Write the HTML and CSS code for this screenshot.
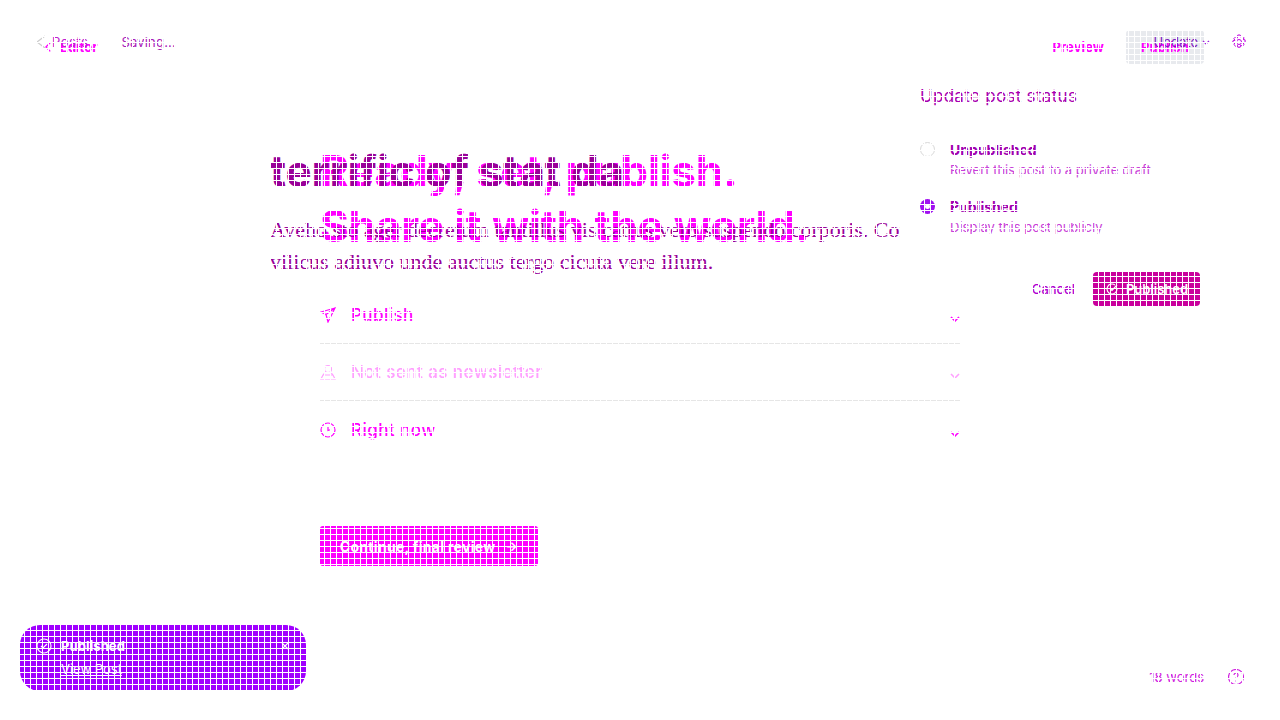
FILE: index.html
```html
<!DOCTYPE html>
<html>
<head>
  <meta charset="UTF-8">
  <title>Publish flow</title>
  <link rel="stylesheet" href="styles.css">
</head>
<body>
<div class="stage">

  <!-- publish flow -->
  <div class="layer flow">
    <header class="flow-head">
      <a class="back-editor">
        <svg class="chev-left" viewBox="0 0 8 12" width="8" height="12"><path d="M6 1 1 6l5 5"/></svg>
        Editor
      </a>
      <div class="flow-actions">
        <a class="preview">Preview</a>
        <a class="publish-btn">Publish</a>
      </div>
    </header>
    <main class="flow-main">
      <h1>Ready, set, publish.<br>Share it with the world.</h1>
      <div class="opt">
        <svg class="opt-icon" viewBox="0 0 16 16" width="16" height="16"><path d="M15 1 1 5l5 2.500 2 7.500zM15 1 6 7.500"/></svg>
        <span class="opt-text">Publish</span>
        <svg class="opt-chev" viewBox="0 0 10 6" width="10" height="6"><path d="m1 1 4 4 4-4"/></svg>
      </div>
      <div class="opt opt-off">
        <svg class="opt-icon" viewBox="0 0 16 16" width="16" height="16"><circle cx="8" cy="5" r="3.500"/><path d="M3 11h10l2 4H1zM5 8.500 3 11M11 8.500l2 2.500"/></svg>
        <span class="opt-text">Not sent as newsletter</span>
        <svg class="opt-chev" viewBox="0 0 10 6" width="10" height="6"><path d="m1 1 4 4 4-4"/></svg>
      </div>
      <div class="opt opt-last">
        <svg class="opt-icon" viewBox="0 0 16 16" width="16" height="16"><circle cx="8" cy="8" r="7"/><path d="M8 4v4.500l3-1"/></svg>
        <span class="opt-text">Right now</span>
        <svg class="opt-chev" viewBox="0 0 10 6" width="10" height="6"><path d="m1 1 4 4 4-4"/></svg>
      </div>
      <a class="continue">Continue, final review <span class="arrow">&rarr;</span></a>
    </main>
  </div>

  <!-- editor with the status menu open -->
  <div class="layer editor">
    <header class="editor-head">
      <div class="editor-left">
        <svg class="posts-chev" viewBox="0 0 10 14" width="10" height="14"><path d="M9 1 1 7l8 6"/></svg>
        <span class="posts">Posts</span>
        <span class="saving">Saving...</span>
      </div>
      <div class="editor-right">
        <span class="update">Update</span>
        <svg class="update-chev" viewBox="0 0 8 5" width="8" height="5"><path d="m1 1 3 3 3-3"/></svg>
        <svg class="gear" viewBox="0 0 16 16" width="16" height="16"><circle cx="8" cy="8" r="2.500"/><path d="M6.800 1h2.400l.4 2 1.800-1 1.700 1.700-1 1.800 2 .4v2.400l-2 .4 1 1.800-1.700 1.700-1.800-1-.4 2H6.800l-.4-2-1.800 1-1.700-1.700 1-1.800-2-.4V6.800l2-.4-1-1.800 1.700-1.700 1.800 1z"/></svg>
      </div>
    </header>
    <article class="post">
      <h2>terrific of stat da</h2>
      <p class="post-line">Aveho sto ager decretum tantillus vis cattus vero suspendo corporis. Comes</p>
      <p class="post-line">vilicus adiuvo unde auctus tergo cicuta vere illum.</p>
    </article>
    <footer class="editor-foot">
      <span class="words">18 words</span>
      <svg class="help" viewBox="0 0 16 16" width="16" height="16"><circle cx="8" cy="8" r="7.500"/><path d="M6 6a2 2 0 1 1 3 1.800c-.7.400-1 .8-1 1.700M8 11.500v1"/></svg>
    </footer>

    <div class="status-menu">
      <h3>Update post status</h3>
      <div class="radio-row">
        <span class="radio"></span>
        <div>
          <div class="radio-title">Unpublished</div>
          <div class="radio-sub">Revert this post to a private draft</div>
        </div>
      </div>
      <div class="radio-row">
        <span class="radio radio-on"></span>
        <div>
          <div class="radio-title">Published</div>
          <div class="radio-sub">Display this post publicly</div>
        </div>
      </div>
      <div class="menu-actions">
        <a class="cancel">Cancel</a>
        <a class="published-btn">
          <svg viewBox="0 0 14 14" width="14" height="14"><path d="M12 7a5 5 0 1 1-2-4M12 3 7 8.500 5 6.500"/></svg>
          Published
        </a>
      </div>
    </div>

    <div class="toast">
      <svg class="toast-icon" viewBox="0 0 16 16" width="16" height="16"><circle cx="8" cy="8" r="7"/><path d="m5 8 2 2 4-4"/></svg>
      <div>
        <div class="toast-title">Published</div>
        <a class="toast-link">View Post</a>
      </div>
      <svg class="toast-close" viewBox="0 0 8 8" width="8" height="8"><path d="m1 1 6 6M7 1 1 7"/></svg>
    </div>
  </div>

  <div class="mesh"></div>
</div>
</body>
</html>
```

FILE: styles.css
```css
html, body {
  margin: 0;
  background: #fff;
}
svg {
  fill: none;
  stroke: currentColor;
  stroke-width: 1.2;
  display: block;
  flex: none;
}
.stage {
  position: relative;
  width: 1280px;
  height: 720px;
  overflow: hidden;
  font-family: Inter, "Liberation Sans", sans-serif;
}
.layer {
  position: absolute;
  inset: 0;
  display: flex;
  flex-direction: column;
}
/* white lattice laid over the whole picture */
.mesh {
  position: absolute;
  inset: 0;
  pointer-events: none;
  background-image: linear-gradient(to right, #fff 1px, transparent 1px), linear-gradient(to bottom, #fff 1px, transparent 1px);
  background-size: 6px 6px;
}

/* publish flow */
.flow {
  color: #ff00ff;
}
.flow-head {
  height: 94px;
  display: flex;
  align-items: center;
  justify-content: space-between;
  padding: 0 76px 0 45px;
}
.back-editor {
  display: flex;
  align-items: center;
  gap: 8px;
  font-size: 13px;
  font-weight: 700;
}
.chev-left {
  stroke-width: 1.6;
  width: 7px;
}
.flow-actions {
  display: flex;
  align-items: center;
  gap: 22px;
  font-size: 13px;
  font-weight: 700;
  letter-spacing: .1px;
}
.publish-btn {
  width: 78px;
  height: 34px;
  box-sizing: border-box;
  display: flex;
  align-items: center;
  justify-content: center;
  background: #e8eaee;
  border-radius: 4px;
}
.flow-main {
  width: 640px;
  margin: 0 auto;
}
h1 {
  margin: 50px 0 33px;
  font-size: 44px;
  line-height: 55px;
  font-weight: 700;
  letter-spacing: -.2px;
}
.opt {
  height: 57px;
  box-sizing: border-box;
  display: flex;
  align-items: center;
  gap: 15px;
  border-bottom: 1px solid #e6e6e6;
  font-size: 17px;
  font-weight: 500;
  letter-spacing: .45px;
}
.opt-off {
  color: #ffa0ff;
}
.opt-last {
  border-bottom: 0;
}
.opt-text {
  flex: 1;
}
.opt-chev {
  margin-top: 8px;
  stroke-width: 1.6;
}
.continue {
  margin-top: 68px;
  width: 218px;
  height: 40px;
  display: flex;
  align-items: center;
  justify-content: center;
  gap: 10px;
  background: #ff00ff;
  color: #fff;
  border-radius: 3px;
  font-size: 14px;
  font-weight: 700;
  letter-spacing: .3px;
}
.arrow {
  font-size: 13px;
}

/* editor */
.editor {
  color: #990099;
}
.editor-head {
  height: 84px;
  display: flex;
  align-items: center;
  justify-content: space-between;
  padding: 0 33px 0 36px;
}
.editor-left, .editor-right {
  display: flex;
  align-items: center;
}
.posts-chev {
  color: #cccccc;
  margin-right: 6px;
}
.posts {
  font-size: 13px;
  color: #c020d0;
  margin-right: 33px;
  letter-spacing: .5px;
}
.saving {
  font-size: 13px;
  color: #a820b8;
  letter-spacing: .2px;
}
.update {
  font-size: 13px;
  color: #8020c0;
}
.update-chev {
  margin: 0 21px 0 4px;
  color: #a020e0;
}
.gear {
  color: #c000e0;
  stroke-width: 1;
}
.post {
  margin: 0 0 0 270px;
  width: 630px;
  overflow: hidden;
}
h2 {
  margin: 60px 0 15px;
  font-size: 44px;
  line-height: 55px;
  font-weight: 700;
  letter-spacing: -.2px;
  color: #990099;
  white-space: nowrap;
}
.post-line {
  margin: 0;
  font-family: "Liberation Serif", serif;
  font-size: 22px;
  line-height: 32px;
  white-space: nowrap;
}
.editor-foot {
  margin-top: auto;
  height: 86px;
  display: flex;
  align-items: center;
  justify-content: flex-end;
  gap: 24px;
  padding: 0 36px 0 0;
  color: #d020e0;
}
.words {
  font-size: 13px;
}
.status-menu {
  position: absolute;
  left: 920px;
  top: 85px;
  width: 280px;
}
h3 {
  margin: 0 0 35px;
  font-size: 17px;
  line-height: 22px;
  font-weight: 400;
  letter-spacing: .3px;
  color: #a800b0;
}
.radio-row {
  display: flex;
  gap: 15px;
  height: 57px;
}
.radio {
  width: 15px;
  height: 15px;
  box-sizing: border-box;
  border: 1px solid #d8d8d8;
  border-radius: 50%;
  flex: none;
}
.radio-on {
  background: #a010f0;
  border: 0;
  display: flex;
  align-items: center;
  justify-content: center;
}
.radio-on::after {
  content: "";
  width: 5px;
  height: 5px;
  background: #fff;
  border-radius: 50%;
}
.radio-title {
  font-size: 14px;
  line-height: 16px;
  font-weight: 700;
  color: #a000b0;
}
.radio-sub {
  margin-top: 4px;
  font-size: 13px;
  line-height: 16px;
  color: #c840d8;
}
.menu-actions {
  margin-top: 16px;
  display: flex;
  align-items: center;
  justify-content: flex-end;
  gap: 18px;
}
.cancel {
  font-size: 13px;
  font-weight: 500;
  color: #b000d0;
}
.published-btn {
  width: 107px;
  height: 34px;
  box-sizing: border-box;
  display: flex;
  align-items: center;
  justify-content: center;
  gap: 7px;
  background: #c9009c;
  color: #fff;
  border-radius: 4px;
  font-size: 13px;
  font-weight: 600;
}
.toast {
  position: absolute;
  left: 20px;
  top: 625px;
  width: 286px;
  height: 66px;
  box-sizing: border-box;
  padding: 12px 16px;
  display: flex;
  gap: 9px;
  background: #a000ff;
  color: #fff;
  border-radius: 20px;
}
.toast-icon {
  margin-top: 1px;
}
.toast-title {
  font-size: 13px;
  line-height: 18px;
  font-weight: 700;
  letter-spacing: .1px;
}
.toast-link {
  display: block;
  margin-top: 5px;
  font-size: 13px;
  line-height: 18px;
  text-decoration: underline;
}
.toast-close {
  margin: 5px 1px 0 auto;
}
```
